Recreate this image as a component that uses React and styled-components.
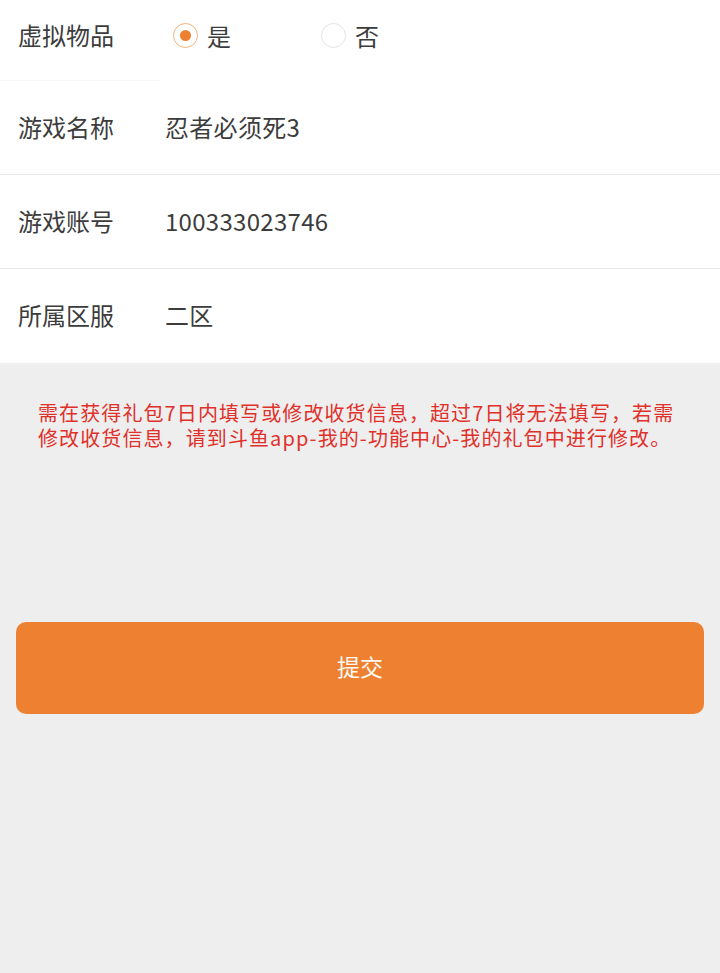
import React from "react";
import styled, { createGlobalStyle } from "styled-components";

const Global = createGlobalStyle`
  html, body {
    margin: 0;
    padding: 0;
    background: #eeeeee;
  }
  body {
    font-family: "Noto Sans CJK SC", "Noto Sans", sans-serif;
    -webkit-font-smoothing: antialiased;
  }
`;

const Page = styled.div`
  min-height: 100vh;
  background: #eeeeee;
  display: flex;
  flex-direction: column;
`;

const Form = styled.div`
  background: #ffffff;
  display: flex;
  flex-direction: column;
`;

const Row = styled.div`
  display: flex;
  align-items: center;
  box-sizing: border-box;
  height: ${(p) => p.$height}px;
  padding: 0 0 ${(p) => p.$shift || 0}px 18px;
  ${(p) =>
    p.$divider === "full"
      ? "border-bottom: 1px solid #e9e9e9;"
      : p.$divider === "partial"
      ? "background: linear-gradient(#f8f8f8, #f8f8f8) no-repeat left bottom / 160px 1px, #ffffff;"
      : ""}
`;

const Label = styled.div`
  width: 147px;
  flex-shrink: 0;
  font-size: 24px;
  color: #3c3c3c;
  line-height: 1;
`;

const Value = styled.div`
  font-size: 24px;
  color: #3c3c3c;
  line-height: 1;
  letter-spacing: 0.3px;
`;

const RadioGroup = styled.div`
  display: flex;
  align-items: center;
  margin-left: 8px;
`;

const RadioOption = styled.label`
  display: flex;
  align-items: center;
  width: 148px;
  gap: 9px;
  font-size: 24px;
  color: #3c3c3c;
  line-height: 1;
  margin-top: 2px;
`;

const RadioCircle = styled.span`
  width: 25px;
  height: 25px;
  box-sizing: border-box;
  border-radius: 50%;
  border: 1.5px solid ${(p) => (p.$checked ? "#f1b37f" : "#e4e4e4")};
  display: flex;
  align-items: center;
  justify-content: center;
  background: #fff;
  &::after {
    content: "";
    width: 11px;
    height: 11px;
    border-radius: 50%;
    background: ${(p) => (p.$checked ? "#ee8032" : "transparent")};
  }
`;

const Notice = styled.p`
  margin: 0;
  padding: 37px 38px 0;
  font-size: 20px;
  line-height: 25px;
  letter-spacing: 1.1px;
  color: #e0302a;
`;

const SubmitButton = styled.button`
  margin: 172px 16px 0;
  height: 92px;
  border: none;
  border-radius: 10px;
  background: #ee8032;
  color: #fffaf2;
  font-family: "Noto Sans CJK SC", "Noto Sans", sans-serif;
  font-size: 23px;
  line-height: 1;
  padding: 0 0 3px;
  cursor: pointer;
`;

export default function App() {
  return (
    <Page>
      <Global />
      <Form>
        <Row $height={81} $shift={12} $divider="partial">
          <Label>虚拟物品</Label>
          <RadioGroup>
            <RadioOption>
              <RadioCircle $checked />
              是
            </RadioOption>
            <RadioOption>
              <RadioCircle />
              否
            </RadioOption>
          </RadioGroup>
        </Row>
        <Row $height={94} $shift={2} $divider="full">
          <Label>游戏名称</Label>
          <Value>忍者必须死3</Value>
        </Row>
        <Row $height={94} $shift={2} $divider="full">
          <Label>游戏账号</Label>
          <Value>100333023746</Value>
        </Row>
        <Row $height={94} $shift={2}>
          <Label>所属区服</Label>
          <Value>二区</Value>
        </Row>
      </Form>
      <Notice>
        需在获得礼包7日内填写或修改收货信息，超过7日将无法填写，若需修改收货信息，请到斗鱼app-我的-功能中心-我的礼包中进行修改。
      </Notice>
      <SubmitButton>提交</SubmitButton>
    </Page>
  );
}
